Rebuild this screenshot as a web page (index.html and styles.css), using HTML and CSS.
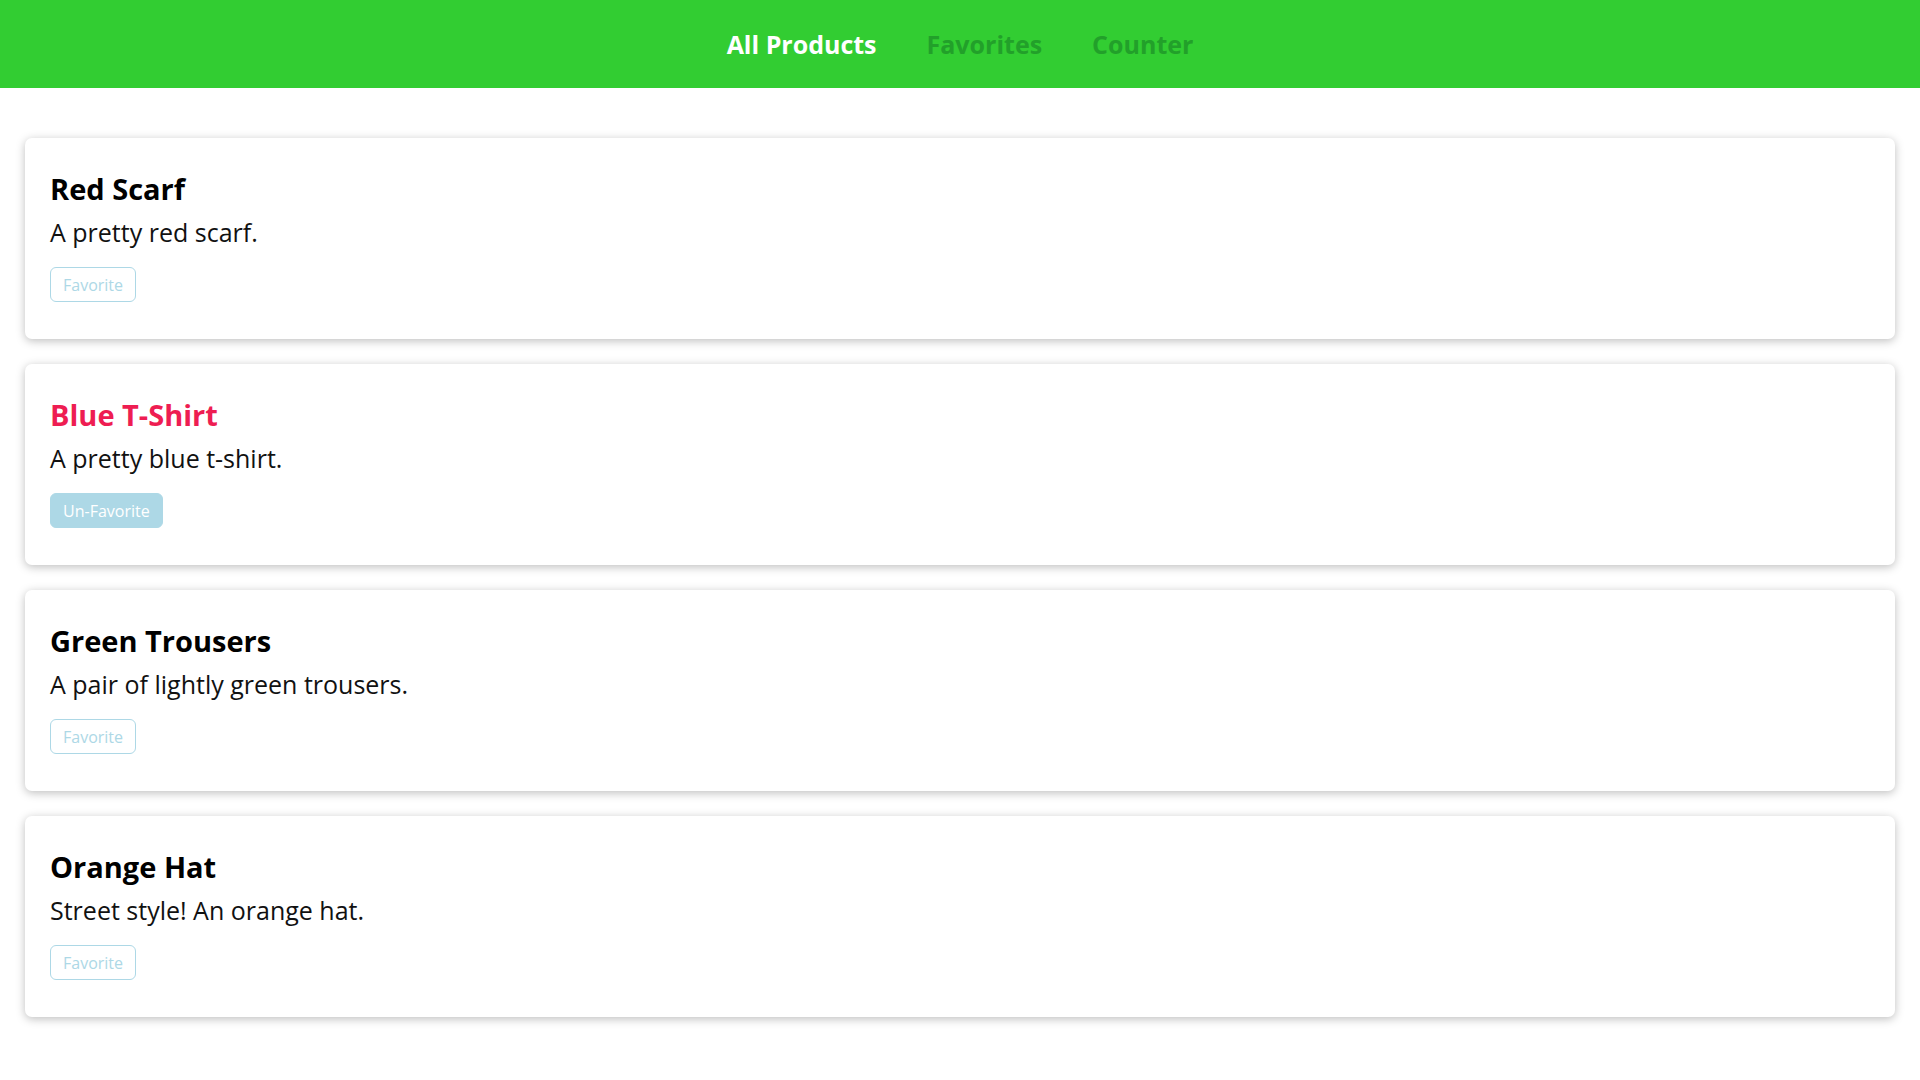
FILE: index.html
```html
<!DOCTYPE html>
<html lang="en">
<head>
<meta charset="utf-8">
<title>Products</title>
<link rel="stylesheet" href="styles.css">
</head>
<body>
<header class="main-header">
  <nav class="main-nav">
    <a class="nav-link active" href="#">All Products</a>
    <a class="nav-link" href="#">Favorites</a>
    <a class="nav-link" href="#">Counter</a>
  </nav>
</header>
<main class="products">
  <article class="card">
    <h2 class="card-title">Red Scarf</h2>
    <p class="card-desc">A pretty red scarf.</p>
    <button class="fav-btn">Favorite</button>
  </article>
  <article class="card">
    <h2 class="card-title is-fav">Blue T-Shirt</h2>
    <p class="card-desc">A pretty blue t-shirt.</p>
    <button class="fav-btn filled">Un-Favorite</button>
  </article>
  <article class="card">
    <h2 class="card-title">Green Trousers</h2>
    <p class="card-desc">A pair of lightly green trousers.</p>
    <button class="fav-btn">Favorite</button>
  </article>
  <article class="card">
    <h2 class="card-title">Orange Hat</h2>
    <p class="card-desc">Street style! An orange hat.</p>
    <button class="fav-btn">Favorite</button>
  </article>
</main>
</body>
</html>
```
FILE: styles.css
```css
* { box-sizing: border-box; }
html, body {
  margin: 0;
  padding: 0;
  background: #ffffff;
  font-family: "Open Sans", "Noto Sans", sans-serif;
}
.main-header {
  height: 88px;
  background: #32cd32;
  display: flex;
  align-items: center;
}
.main-nav {
  flex: 1;
  display: flex;
  justify-content: center;
  gap: 50px;
}
.nav-link {
  font-size: 25px;
  font-weight: 700;
  color: #22a02a;
  text-decoration: none;
}
.nav-link.active { color: #ffffff; }
.products {
  display: flex;
  flex-direction: column;
  gap: 25px;
  padding: 50px 25px;
}
.card {
  background: #ffffff;
  border-radius: 7px;
  box-shadow: 0 2px 10px rgba(0, 0, 0, 0.26);
  padding: 31px 25px 37px;
  display: flex;
  flex-direction: column;
  align-items: flex-start;
}
.card-title {
  margin: 0;
  font-size: 29px;
  font-weight: 700;
  color: #000000;
}
.card-title.is-fav { color: #ee1d52; }
.card-desc {
  margin: 7px 0 0;
  font-size: 25px;
  color: #111111;
}
.fav-btn {
  margin-top: 18px;
  height: 35px;
  padding: 0 12px;
  font-family: "Open Sans", "Noto Sans", sans-serif;
  font-size: 16px;
  color: #add8e6;
  background: #ffffff;
  border: 1px solid #add8e6;
  border-radius: 6px;
  cursor: pointer;
}
.fav-btn.filled {
  background: #add8e6;
  color: #ffffff;
}
```
